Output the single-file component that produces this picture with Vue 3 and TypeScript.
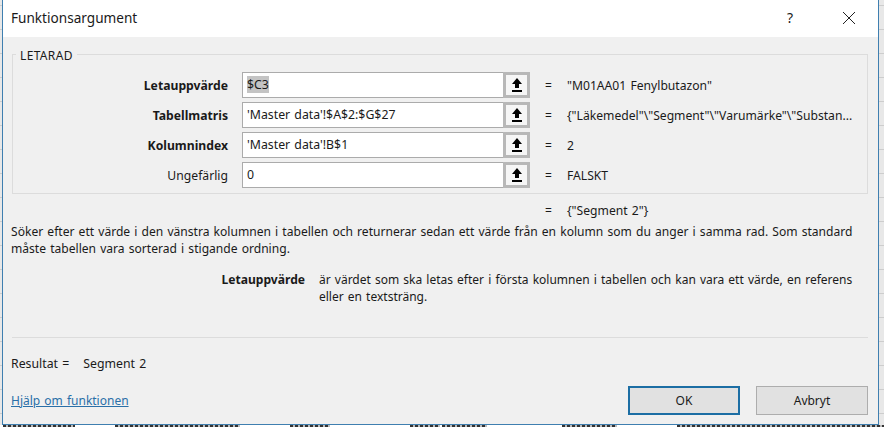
<template>
  <div class="screen">
    <div class="dialog">
      <div class="titlebar">
        <span class="title">Funktionsargument</span>
        <div class="title-btns">
          <span class="help">?</span>
          <svg class="close" width="14" height="14" viewBox="0 0 14 14">
            <path d="M1 1L13 13M13 1L1 13" stroke="#222" stroke-width="1" fill="none" />
          </svg>
        </div>
      </div>

      <div class="body">
        <div class="group">
          <span class="legend">LETARAD</span>
          <div v-for="row in rows" :key="row.label" class="arg-row">
            <label class="arg-label" :class="{ bold: row.bold }">{{ row.label }}</label>
            <div class="arg-input">
              <span class="arg-text"><span :class="{ selected: row.selected }">{{ row.text }}</span></span>
              <span class="ref-btn">
                <svg width="10" height="14" viewBox="0 0 10 14">
                  <path d="M5 0L10 6H7V10H3V6H0Z" fill="#000" />
                  <rect x="0" y="12" width="10" height="2" fill="#000" />
                </svg>
              </span>
            </div>
            <span class="eq">=</span>
            <span class="arg-value">{{ row.value }}</span>
          </div>
        </div>

        <div class="result-row">
          <span class="eq">=</span>
          <span class="arg-value">{"Segment 2"}</span>
        </div>

        <p class="desc">Söker efter ett värde i den vänstra kolumnen i tabellen och returnerar sedan ett värde från en kolumn som du anger i samma rad. Som standard måste tabellen vara sorterad i stigande ordning.</p>

        <div class="arg-help">
          <span class="arg-help-name">Letauppvärde</span>
          <span class="arg-help-text">är värdet som ska letas efter i första kolumnen i tabellen och kan vara ett värde, en referens eller en textsträng.</span>
        </div>

        <div class="footer">
          <div class="result">
            <span>Resultat =</span>
            <span>Segment 2</span>
          </div>
          <div class="actions">
            <a class="help-link" href="#">Hjälp om funktionen</a>
            <div class="buttons">
              <button class="btn primary">OK</button>
              <button class="btn">Avbryt</button>
            </div>
          </div>
        </div>
      </div>
    </div>
    <!-- sheet cells cut off under the dialog -->
    <div class="sheet-strip">
      <span v-for="(cell, i) in sheetCells" :key="i" class="sheet-cell" :style="{ width: cell.width + 'px', marginLeft: cell.gap + 'px' }"></span>
    </div>
  </div>
</template>

<script setup lang="ts">
interface ArgRow {
  label: string;
  text: string;
  value: string;
  bold: boolean;
  selected?: boolean;
}

const rows: ArgRow[] = [
  { label: 'Letauppvärde', text: '$C3', value: '"M01AA01 Fenylbutazon"', bold: true, selected: true },
  { label: 'Tabellmatris', text: "'Master data'!$A$2:$G$27", value: '{"Läkemedel"\\"Segment"\\"Varumärke"\\"Substan...', bold: true },
  { label: 'Kolumnindex', text: "'Master data'!B$1", value: '2', bold: true },
  { label: 'Ungefärlig', text: '0', value: 'FALSKT', bold: false }
];

const sheetCells = [
  { gap: 3, width: 72 },
  { gap: 40, width: 125 },
  { gap: 50, width: 40 },
  { gap: 80, width: 30 },
  { gap: 2, width: 45 },
  { gap: 75, width: 55 },
  { gap: 60, width: 220 }
];
</script>

<style>
html,
body {
  margin: 0;
  background: #fff;
}
</style>

<style scoped>
.screen {
  width: 884px;
  height: 427px;
  overflow: hidden;
  box-sizing: border-box;
  padding-left: 2px;
  background-color: #e8e8e8;
  background-image: repeating-linear-gradient(to bottom, transparent 0, transparent 5px, #cdcdcd 5px, #cdcdcd 6px, transparent 6px, transparent 24px);
  font-family: "Noto Sans", "Open Sans", sans-serif;
  font-size: 12px;
  word-spacing: 1px;
  color: #1a1a1a;
}

.dialog {
  width: 877px;
  height: 425px;
  box-sizing: border-box;
  border: 1px solid #3f7fb0;
  border-top: none;
  display: flex;
  flex-direction: column;
  background: #f0f0f0;
}

.titlebar {
  height: 37px;
  flex: none;
  box-sizing: border-box;
  padding: 0 22px 2px 8px;
  background: #fff;
  display: flex;
  align-items: center;
  justify-content: space-between;
}

.title {
  font-size: 13.6px;
}

.title-btns {
  display: flex;
  align-items: center;
  gap: 49px;
}

.help {
  font-size: 14px;
}

.close {
  display: block;
}

.body {
  flex: 1;
  display: flex;
  flex-direction: column;
  padding: 17px 10px 0 8px;
}

.group {
  position: relative;
  height: 140px;
  box-sizing: border-box;
  margin: 0 0 0 1px;
  border: 1px solid #dcdcdc;
  padding-top: 17px;
  display: flex;
  flex-direction: column;
  gap: 4px;
}

.legend {
  position: absolute;
  left: 3px;
  top: -7px;
  padding: 0 4px;
  background: #f0f0f0;
  line-height: 16px;
  letter-spacing: 0.35px;
}

.arg-row {
  display: flex;
  align-items: center;
  height: 26px;
}

.arg-label {
  width: 215px;
  text-align: right;
  font-size: 12.2px;
}

.bold {
  font-weight: 700;
}

.arg-input {
  margin-left: 14px;
  width: 288px;
  height: 26px;
  box-sizing: border-box;
  display: flex;
  border: 1px solid #ababab;
  background: #fff;
}

.arg-text {
  flex: 1;
  padding-left: 4px;
  line-height: 24px;
  font-size: 12.3px;
}

.selected {
  background: #c4c4c4;
}

.ref-btn {
  width: 27px;
  flex: none;
  box-sizing: border-box;
  margin: -1px -1px -1px 0;
  border: 3px solid #b8b8b8;
  background: #f6f6f6;
  display: flex;
  align-items: center;
  justify-content: center;
}

.eq {
  margin-left: 15px;
  width: 22px;
}

.arg-value {
  white-space: nowrap;
  font-size: 12.15px;
}

.result-row {
  display: flex;
  height: 18px;
  align-items: center;
  margin-top: 7px;
  padding-left: 519px;
}

.desc {
  margin: 4px 0 0;
  line-height: 17px;
  font-size: 12.08px;
}

.arg-help {
  display: flex;
  margin-top: 14px;
}

.arg-help-name {
  width: 294px;
  flex: none;
  text-align: right;
  font-weight: 700;
  font-size: 12.1px;
}

.arg-help-text {
  margin-left: 14px;
  line-height: 17px;
  width: 540px;
}

.footer {
  margin-top: auto;
  border-top: 1px solid #dcdcdc;
  margin-left: 1px;
  padding-top: 17px;
  height: 87px;
  box-sizing: border-box;
}

.result {
  display: flex;
  gap: 14px;
  margin-left: -1px;
  font-size: 12.3px;
}

.actions {
  display: flex;
  align-items: center;
  justify-content: space-between;
  margin-top: 14px;
  margin-left: -1px;
}

.help-link {
  color: #2a6fa8;
  text-decoration: underline;
}

.buttons {
  display: flex;
  gap: 16px;
}

.btn {
  width: 112px;
  height: 29px;
  box-sizing: border-box;
  border: 1px solid #adadad;
  background: #e1e1e1;
  font: inherit;
  color: inherit;
}

.primary {
  border: 2px solid #1c6ea4;
}

.sheet-strip {
  display: flex;
  height: 2px;
  margin-left: -2px;
  background: #fff;
}

.sheet-cell {
  flex: none;
  height: 2px;
  background-image: repeating-linear-gradient(to right, #333 0, #333 3px, #bbb 3px, #bbb 5px);
}
</style>
